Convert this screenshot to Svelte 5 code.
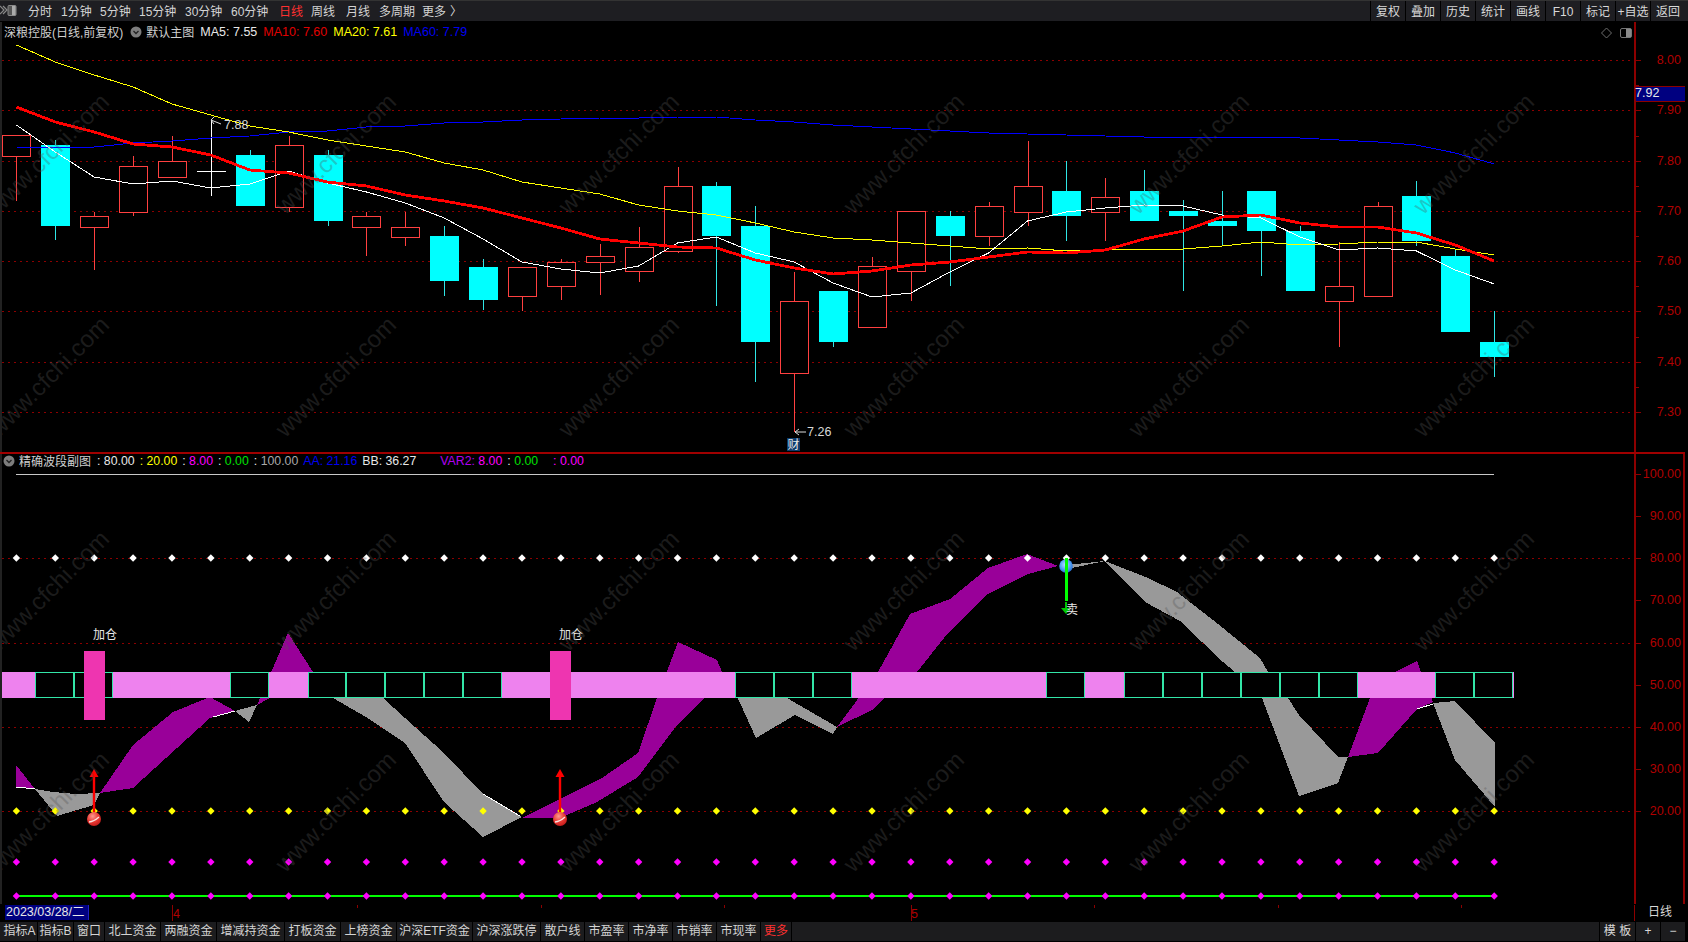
<script>
  const X = (i) => 16.4 + 38.89 * i;
  const xs = Array.from({ length: 39 }, (_, i) => X(i));
  const pts = (a) => a.map((y, i) => `${X(i).toFixed(1)},${y}`).join(' ');
  const dot = (x, y, r = 3.7) => `${x},${y - r} ${x + r},${y} ${x},${y + r} ${x - r},${y}`;

  const leftTabs = [
    { t: '分时', w: 33 }, { t: '1分钟', w: 39 }, { t: '5分钟', w: 39 }, { t: '15分钟', w: 46 },
    { t: '30分钟', w: 46 }, { t: '60分钟', w: 48 }, { t: '日线', w: 32, on: true }, { t: '周线', w: 35 },
    { t: '月线', w: 33 }, { t: '多周期', w: 43 }, { t: '更多', w: 28 }, { t: '〉', w: 16 }
  ];
  const rightTabs = ['复权', '叠加', '历史', '统计', '画线', 'F10', '标记', '+自选', '返回'];
  const bottomTabs = [
    { t: '指标A', w: 36 }, { t: '指标B', w: 36 }, { t: '窗口', w: 31 }, { t: '北上资金', w: 56 },
    { t: '两融资金', w: 56 }, { t: '增减持资金', w: 68 }, { t: '打板资金', w: 56 }, { t: '上榜资金', w: 56 },
    { t: '沪深ETF资金', w: 76 }, { t: '沪深涨跌停', w: 68 }, { t: '散户线', w: 44 }, { t: '市盈率', w: 44 },
    { t: '市净率', w: 44 }, { t: '市销率', w: 44 }, { t: '市现率', w: 44 }, { t: '更多', w: 31, red: true }
  ];

  // type, high, body top, body bottom, low
  const candles = [
    ['r', 135, 135, 156, 201], ['c', 140, 145, 226, 240], ['r', 212, 216, 227, 270], ['r', 156, 166, 212, 216],
    ['r', 136, 161, 177, 177], ['d', 119, 171, 171, 196], ['c', 150, 155, 206, 206], ['r', 136, 145, 207, 212],
    ['c', 150, 155, 221, 226], ['r', 212, 216, 227, 256], ['r', 212, 227, 237, 246], ['c', 226, 236, 281, 296],
    ['c', 259, 267, 300, 310], ['r', 267, 267, 296, 311], ['r', 259, 262, 286, 300], ['r', 244, 256, 262, 295],
    ['r', 227, 247, 271, 282], ['r', 167, 186, 251, 253], ['c', 182, 186, 236, 306], ['c', 206, 226, 342, 382],
    ['r', 272, 301, 373, 432], ['c', 291, 291, 342, 347], ['r', 257, 266, 327, 327], ['r', 211, 211, 271, 301],
    ['c', 211, 216, 236, 286], ['r', 202, 206, 236, 246], ['r', 141, 186, 212, 226], ['c', 161, 191, 216, 241],
    ['r', 178, 197, 212, 241], ['c', 170, 191, 221, 221], ['c', 200, 211, 216, 291], ['c', 191, 221, 226, 246],
    ['c', 191, 191, 231, 276], ['c', 226, 231, 291, 291], ['r', 242, 286, 301, 347], ['r', 202, 206, 296, 296],
    ['c', 181, 196, 241, 246], ['c', 250, 256, 332, 332], ['c', 311, 342, 357, 377]
  ];

  const ma20 = [45, 62, 75, 87, 104, 115, 126, 132, 140, 146, 152, 163, 170, 182, 188, 194, 205, 211, 215, 223, 232, 238, 240, 243, 246, 249, 248, 251, 250, 249, 249, 246, 242, 245, 244, 242, 242, 249, 255];
  const ma10 = [107, 122, 132, 144, 147, 155, 170, 173, 182, 186, 195, 201, 208, 218, 228, 239, 243, 247, 248, 260, 268, 274, 271, 265, 262, 257, 252, 253, 250, 239, 231, 217, 215, 223, 227, 227, 233, 245, 261];
  const ma5 = [125, 152, 177, 184, 181, 188, 184, 171, 183, 192, 203, 218, 239, 262, 269, 273, 266, 243, 237, 253, 262, 283, 297, 293, 272, 253, 221, 212, 208, 205, 206, 215, 218, 237, 250, 248, 251, 270, 284];
  const ma60 = [147, 148, 147, 143, 141, 138, 136, 132, 131, 127, 126, 123, 122, 120, 119, 118, 118, 117, 117, 120, 122, 125, 127, 129, 131, 133, 134, 135, 136, 137, 137, 137, 137, 138, 140, 142, 145, 153, 164];

  const purple = [
    '16,765 35,789 16,787',
    '100,793 133,745 173,712 210,697 235,711 210,718 133,788',
    '257,705 288,633 313,672 325,690 270,698',
    '522,818 602,778 638,753 657,698 678,642 717,660 722,672 735,692 704,698 677,725 638,777 597,802 560,818',
    '837,727 878,672 910,614 950,599 988,568 1027,554 1058,566 1028,574 988,594 948,633 917,672 885,698 872,710',
    '1348,757 1370,698 1395,672 1417,661 1421,672 1433,702 1417,709 1378,753'
  ];
  const gray = [
    '35,789 53,792 75,794 100,793 94,805 57,816',
    '235,711 257,705 249,722',
    '325,690 383,698 405,718 444,753 483,794 522,817 483,837 444,802 405,743 366,717 333,698',
    '735,692 787,698 837,727 833,734 795,715 756,738',
    '1058,566 1105,561 1148,578 1177,592 1213,620 1260,658 1268,672 1288,698 1299,715 1338,757 1348,757 1338,783 1299,796 1262,698 1235,672 1223,662 1180,621 1145,602 1105,561 1072,568',
    '1433,703 1455,701 1495,743 1495,807 1455,760'
  ];
  const whiteEdges = ['16,787 35,789', '213,717 235,711', '1417,709 1433,704', '483,794 520,816'];

  const ribbonBlack = [1, 2, 6, 8, 9, 10, 11, 12, 19, 20, 21, 27, 29, 30, 31, 32, 33, 34, 37, 38];
  const ribbonLeft = (i) => (i === 0 ? 2 : X(i) - 19.45);
  const cw = 38.89;

  const mainLabels = [['8.00', 60], ['7.90', 110], ['7.80', 161], ['7.70', 211], ['7.60', 261], ['7.50', 311], ['7.40', 362], ['7.30', 412]];
  const mainMinor = [85, 136, 186, 236, 286, 337, 387];
  const subLabels = [['100.00', 474], ['90.00', 516], ['80.00', 558], ['70.00', 600], ['60.00', 643], ['50.00', 685], ['40.00', 727], ['30.00', 769], ['20.00', 811]];
  const mainGrid = [60, 110, 161, 211, 261, 311, 362, 412];
  const subGrid = [558, 643, 727, 811];
  const wmCols = [50, 337, 620, 905, 1190, 1475];
  const wmRows = [155, 378, 592, 813];
  const dateTicks = [172, 357, 541, 724, 911, 1094, 1278, 1461];
</script>

<div class="app">
  <header class="toolbar">
    <div class="logo">
      <svg width="17" height="14" viewBox="0 0 17 14">
        <path d="M0 2 L4 6 L0 10 M3 2 L7 6 L3 10" fill="none" stroke="#8a8a8a" stroke-width="1.2" />
        <rect x="8" y="1.5" width="8" height="10" rx="1" fill="#555" stroke="#8a8a8a" />
        <rect x="12" y="2" width="3.5" height="9" fill="#aaa" />
      </svg>
    </div>
    {#each leftTabs as tab}
      <span class="tab" class:on={tab.on} style="width:{tab.w}px">{tab.t}</span>
    {/each}
    <div class="right-tabs">
      {#each rightTabs as t}
        <span class="rtab">{t}</span>
      {/each}
    </div>
  </header>

  <div class="charts">
    <section class="pane main-pane">
      <div class="plot">
        <svg class="fill" viewBox="2 22 1632 430" width="1632" height="430">
          {#each mainGrid as y}
            <line x1="2" x2="1634" y1={y} y2={y} class="grid" />
          {/each}
          {#each candles as c, i}
            {@const x = Math.round(xs[i]) + 0.5}
            {#if c[0] === 'd'}
              <line x1={x} x2={x} y1={c[1]} y2={c[4]} stroke="#fff" class="crisp" />
              <line x1={x - 15} x2={x + 14} y1={c[2] + 0.5} y2={c[2] + 0.5} stroke="#fff" class="crisp" />
            {:else if c[0] === 'c'}
              <line x1={x} x2={x} y1={c[1]} y2={c[4]} stroke="#2fe6e6" class="crisp" />
              <rect x={x - 14.5} y={c[2]} width="29" height={c[3] - c[2]} fill="#00ffff" class="crisp" />
            {:else}
              <line x1={x} x2={x} y1={c[1]} y2={c[2]} stroke="#ff4040" class="crisp" />
              <line x1={x} x2={x} y1={c[3]} y2={c[4]} stroke="#ff4040" class="crisp" />
              <rect x={x - 14} y={c[2] + 0.5} width="28" height={c[3] - c[2]} fill="#000" stroke="#ff4040" class="crisp" />
            {/if}
          {/each}
          <polyline points={pts(ma60)} class="ln crisp" stroke="#0000ff" stroke-width="1" />
          <polyline points={pts(ma20)} class="ln crisp" stroke="#ffff00" stroke-width="1" />
          <polyline points={pts(ma5)} class="ln crisp" stroke="#ffffff" stroke-width="1" />
          <polyline points={pts(ma10)} class="ln crisp" stroke="#ff0000" stroke-width="2.8" />

          <path d="M211 120 L221 124 M211 120 L214 117 M211 120 L214 124" fill="none" stroke="#ddd" />
          <text x="224" y="129" class="mark">7.88</text>
          <path d="M795 432 L806 432 M795 432 L799 429 M795 432 L799 435" fill="none" stroke="#ddd" />
          <text x="807" y="436" class="mark">7.26</text>
          <rect x="787" y="438" width="13" height="13" fill="#0c3a6b" />
          <text x="787.5" y="449" class="mark small">财</text>
        </svg>

        <div class="legend main-legend">
          <span class="title">深粮控股(日线,前复权)</span>
          <svg class="chev" width="12" height="12" viewBox="0 0 12 12">
            <circle cx="6" cy="6" r="5.5" fill="#7d7d7d" />
            <path d="M3.5 5 L6 7.5 L8.5 5" fill="none" stroke="#222" stroke-width="1.3" />
          </svg>
          <span class="title">默认主图</span>
          <span class="white">MA5: 7.55</span>
          <span class="red">MA10: 7.60</span>
          <span class="yellow">MA20: 7.61</span>
          <span class="blue">MA60: 7.79</span>
        </div>

        <div class="corner">
          <svg width="33" height="14" viewBox="0 0 33 14">
            <path d="M6.5 2 L11.5 7 L6.5 12 L1.5 7 Z" fill="none" stroke="#6e6e6e" />
            <rect x="20.5" y="2.5" width="11" height="9" rx="1.5" fill="none" stroke="#777" />
            <rect x="26" y="3" width="5" height="8" fill="#8a8a8a" />
          </svg>
        </div>
      </div>
      <svg class="axis" width="51" height="430" viewBox="1634 22 51 430">
        <line x1="1635" x2="1635" y1="22" y2="452" class="axis-line" />
        {#each mainLabels as l}
          <line x1="1636" x2="1641" y1={l[1]} y2={l[1]} class="tick" />
          <text x="1681" y={l[1] + 3.5} text-anchor="end" class="axis-text">{l[0]}</text>
        {/each}
        {#each mainMinor as y}
          <line x1="1636" x2="1639" y1={y} y2={y} class="tick" />
        {/each}
        <rect x="1636" y="86" width="49" height="15" fill="#000080" />
        <line x1="1636" x2="1685" y1="86" y2="86" class="tick" />
        <line x1="1636" x2="1685" y1="101" y2="101" class="tick" />
        <text x="1635" y="97" class="tag">7.92</text>
      </svg>
    </section>

    <section class="pane sub-pane">
      <div class="plot">
        <svg class="fill" viewBox="2 454 1632 450" width="1632" height="450">
          {#each subGrid as y}
            <line x1="2" x2="1634" y1={y} y2={y} class="grid" />
          {/each}
          <line x1="16" x2="1494" y1="474" y2="474" stroke="#c8c8c8" class="crisp" />
          {#each purple as p}
            <polygon points={p} fill="#990099" class="crisp" />
          {/each}
          {#each gray as p}
            <polygon points={p} fill="#999999" class="crisp" />
          {/each}
          {#each whiteEdges as p}
            <polyline points={p} class="ln crisp" stroke="#fff" />
          {/each}

          <rect x="2" y="672" width="1512" height="26" fill="#ee82ee" class="crisp" />
          {#each ribbonBlack as i}
            <rect x={ribbonLeft(i)} y="672.5" width={cw - 1} height="25" fill="#000" stroke="#33e6a8" class="crisp" />
          {/each}
          <rect x="84" y="651" width="21" height="69" fill="#ee35b0" class="crisp" />
          <rect x="550" y="651" width="21" height="69" fill="#ee35b0" class="crisp" />
          <text x="93" y="639" class="mark small">加仓</text>
          <text x="559" y="639" class="mark small">加仓</text>

          <defs>
            <radialGradient id="ballR" cx="0.4" cy="0.3" r="0.75">
              <stop offset="0" stop-color="#ff9a90" />
              <stop offset="0.55" stop-color="#e83a34" />
              <stop offset="1" stop-color="#c01818" />
            </radialGradient>
            <radialGradient id="ballB" cx="0.45" cy="0.4" r="0.65">
              <stop offset="0" stop-color="#b8e2ff" />
              <stop offset="0.6" stop-color="#4f9cf2" />
              <stop offset="1" stop-color="#1f62c8" />
            </radialGradient>
          </defs>

          {#each xs as x}
            <polygon points={dot(x, 558)} fill="#fff" />
            <polygon points={dot(x, 811)} fill="#ffff00" />
            <polygon points={dot(x, 862)} fill="#ff00ff" />
          {/each}
          <line x1="14" x2="1495" y1="896" y2="896" stroke="#00ff00" stroke-width="2" class="crisp" />
          {#each xs as x}
            <polygon points={dot(x, 896)} fill="#ff00ff" />
          {/each}

          {#each [94, 560] as x}
            <line x1={x} x2={x} y1="775" y2="812" stroke="#ff0000" stroke-width="2.4" />
            <path d="M{x} 769 L{x + 4.5} 777 L{x - 4.5} 777 Z" fill="#ff0000" />
            <circle cx={x} cy="819" r="7" fill="url(#ballR)" />
            <path d="M{x - 5} 822 Q{x} 821.5 {x + 5} 817" fill="none" stroke="#fff" stroke-opacity=".85" stroke-width="1.4" />
          {/each}

          <circle cx="1066" cy="566" r="6.8" fill="url(#ballB)" />
          <rect x="1065" y="558" width="3" height="43" fill="#00ff00" />
          <rect x="1065" y="602" width="2" height="7" fill="#00c800" />
          <path d="M1061 608 L1071 608 L1066 614 Z" fill="#00c800" />
          <text x="1066" y="614" class="mark small">卖</text>
        </svg>

        <div class="legend sub-legend">
          <svg class="chev" width="12" height="12" viewBox="0 0 12 12">
            <circle cx="6" cy="6" r="5.5" fill="#7d7d7d" />
            <path d="M3.5 5 L6 7.5 L8.5 5" fill="none" stroke="#222" stroke-width="1.3" />
          </svg>
          <span class="title">精确波段副图</span>
          <span class="white">: 80.00</span>
          <span class="yellow">: 20.00</span>
          <span><i class="white">:</i> <i class="magenta">8.00</i></span>
          <span><i class="white">:</i> <i class="green">0.00</i></span>
          <span><i class="white">:</i> <i class="grayt">100.00</i></span>
          <span class="blue">AA: 21.16</span>
          <span class="white">BB: 36.27</span>
          <span class="var"><i class="purple">VAR2:</i> <i class="magenta">8.00</i></span>
          <span><i class="white">:</i> <i class="green">0.00</i></span>
          <span class="last magenta">: 0.00</span>
        </div>
      </div>
      <svg class="axis sub-axis" width="51" height="450" viewBox="1634 454 51 450">
        <line x1="1635" x2="1635" y1="454" y2="904" class="axis-line" />
        <line x1="1684" x2="1684" y1="454" y2="904" class="axis-line" />
        {#each subLabels as l}
          <line x1="1636" x2="1641" y1={l[1]} y2={l[1]} class="tick" />
          <text x="1681" y={l[1] + 3.5} text-anchor="end" class="axis-text">{l[0]}</text>
        {/each}
      </svg>
    </section>

    <svg class="watermark" width="1632" height="882" viewBox="2 22 1632 882">
      {#each wmRows as y}
        {#each wmCols as x}
          <text x={x} y={y} text-anchor="middle" dominant-baseline="middle" transform="rotate(-45 {x} {y})" class="wm">www.cfchi.com</text>
        {/each}
      {/each}
    </svg>
  </div>

  <div class="timeaxis">
    <div class="dates">
      <svg width="1634" height="16" viewBox="0 905 1634 16">
        {#each dateTicks as x}
          <line x1={x} x2={x} y1="905" y2={x === 172 || x === 911 ? 921 : 908} class="tick" />
        {/each}
        <text x="173" y="918" class="month">4</text>
        <text x="911" y="918" class="month">5</text>
      </svg>
      <span class="date-tag">2023/03/28/二</span>
    </div>
    <div class="cycle">日线</div>
  </div>

  <footer class="bottombar">
    <div class="btabs">
      {#each bottomTabs as tab}
        <span class="btab" class:red={tab.red} style="width:{tab.w}px">{tab.t}</span>
      {/each}
    </div>
    <div class="tools">
      <span class="tool wide">模 板</span>
      <span class="tool">+</span>
      <span class="tool">−</span>
    </div>
  </footer>
</div>

<style>
  :global(body) {
    margin: 0;
    background: #000;
  }
  .app {
    width: 1688px;
    height: 942px;
    background: #000;
    display: flex;
    flex-direction: column;
    overflow: hidden;
    font-family: "Liberation Sans", "Noto Sans CJK SC", sans-serif;
    font-size: 12.5px;
    color: #d8d8d8;
  }
  .toolbar {
    height: 20px;
    flex: none;
    display: flex;
    align-items: stretch;
    background: #1e1e22;
    border-top: 1px solid #333;
    border-bottom: 1px solid #000;
    padding-right: 3px;
    white-space: nowrap;
  }
  .logo {
    width: 28px;
    height: 14px;
    flex: none;
    margin-top: 3px;
  }
  .tab {
    flex: none;
    color: #d4d4d4;
    font-size: 12px;
    line-height: 23px;
  }
  .tab.on {
    color: #ff3030;
  }
  .right-tabs {
    margin-left: auto;
    display: flex;
  }
  .rtab {
    width: 35px;
    box-sizing: border-box;
    border-left: 1px solid #000;
    text-align: center;
    font-size: 12px;
    line-height: 23px;
    color: #d8d8d8;
  }
  .charts {
    position: relative;
    flex: none;
    height: 883px;
  }
  .pane {
    display: flex;
    width: 1685px;
  }
  .main-pane {
    height: 430px;
  }
  .sub-pane {
    height: 450px;
    border-top: 2px solid #a00000;
  }
  .plot {
    position: relative;
    width: 1632px;
    border-left: 2px solid #222;
    flex: none;
  }
  .fill {
    display: block;
  }
  .axis {
    display: block;
    flex: none;
  }
  .grid {
    stroke: #8c0000;
    stroke-width: 1;
    stroke-dasharray: 2 4;
    shape-rendering: crispEdges;
  }
  .crisp {
    shape-rendering: crispEdges;
  }
  .ln {
    fill: none;
  }
  .tick {
    stroke: #8c0000;
    stroke-width: 1;
    shape-rendering: crispEdges;
  }
  .axis-line {
    stroke: #8c0000;
    stroke-width: 2;
    shape-rendering: crispEdges;
  }
  .axis-text {
    fill: #b00000;
    font-size: 12.5px;
  }
  .tag {
    fill: #e8e8e8;
    font-size: 12.5px;
  }
  .month {
    fill: #b00000;
    font-size: 12.5px;
  }
  .mark {
    fill: #d8d8d8;
    font-size: 12.5px;
  }
  .mark.small {
    font-size: 12px;
    fill: #e8e8e8;
  }
  .legend {
    position: absolute;
    top: 0;
    left: 0;
    display: flex;
    align-items: center;
    white-space: nowrap;
  }
  .legend i {
    font-style: normal;
  }
  .main-legend {
    top: 2px;
    left: 2px;
    height: 16px;
    gap: 6px;
  }
  .main-legend .chev {
    margin: 0 -2px 0 1px;
  }
  .main-legend .title {
    margin-top: -2px;
  }
  .sub-legend {
    top: -2px;
    left: 1px;
    height: 18px;
    gap: 5px;
    font-size: 12.3px;
  }
  .sub-legend .title {
    margin: -2px 1px 0 -1px;
  }
  .title {
    color: #cfcfcf;
    font-size: 12px;
  }
  .white { color: #e8e8e8; }
  .red { color: #e00000; }
  .yellow { color: #ffff00; }
  .blue { color: #0000f0; }
  .magenta { color: #ff00ff; }
  .green { color: #00e000; }
  .grayt { color: #a8a8a8; }
  .purple { color: #b000f0; }
  .var { margin-left: 19px; }
  .last { margin-left: 10px; }
  .corner {
    position: absolute;
    top: 4px;
    right: 1px;
    line-height: 0;
  }
  .watermark {
    position: absolute;
    left: 2px;
    top: 0;
    pointer-events: none;
  }
  .wm {
    fill: #555;
    opacity: 0.32;
    font-size: 24px;
  }
  .timeaxis {
    flex: none;
    height: 16px;
    display: flex;
    width: 1685px;
  }
  .dates {
    position: relative;
    width: 1634px;
    flex: none;
  }
  .dates svg {
    display: block;
  }
  .date-tag {
    position: absolute;
    left: 5px;
    top: 0;
    box-sizing: border-box;
    width: 84px;
    height: 15px;
    line-height: 14px;
    padding-left: 1px;
    background: #000080;
    border-right: 1px solid #2020c0;
    color: #e8e8e8;
    white-space: nowrap;
  }
  .cycle {
    flex: 1;
    border-left: 1px solid #8c0000;
    text-align: center;
    font-size: 12px;
    line-height: 15px;
    color: #d8d8d8;
  }
  .bottombar {
    flex: none;
    height: 19px;
    margin-top: 1px;
    width: 1685px;
    display: flex;
    background: #1c1c1e;
    border-bottom: 1px solid #000;
    white-space: nowrap;
  }
  .btabs {
    display: flex;
    padding-left: 2px;
  }
  .btab {
    flex: none;
    box-sizing: border-box;
    border-right: 1px solid #000;
    text-align: center;
    font-size: 12px;
    line-height: 18px;
    color: #d4d4d4;
  }
  .btab.red {
    color: #ff3030;
  }
  .tools {
    margin-left: auto;
    display: flex;
  }
  .tool {
    width: 25px;
    box-sizing: border-box;
    border-left: 1px solid #000;
    text-align: center;
    font-size: 12px;
    line-height: 18px;
    color: #d8d8d8;
  }
  .tool.wide {
    width: 36px;
  }
</style>
